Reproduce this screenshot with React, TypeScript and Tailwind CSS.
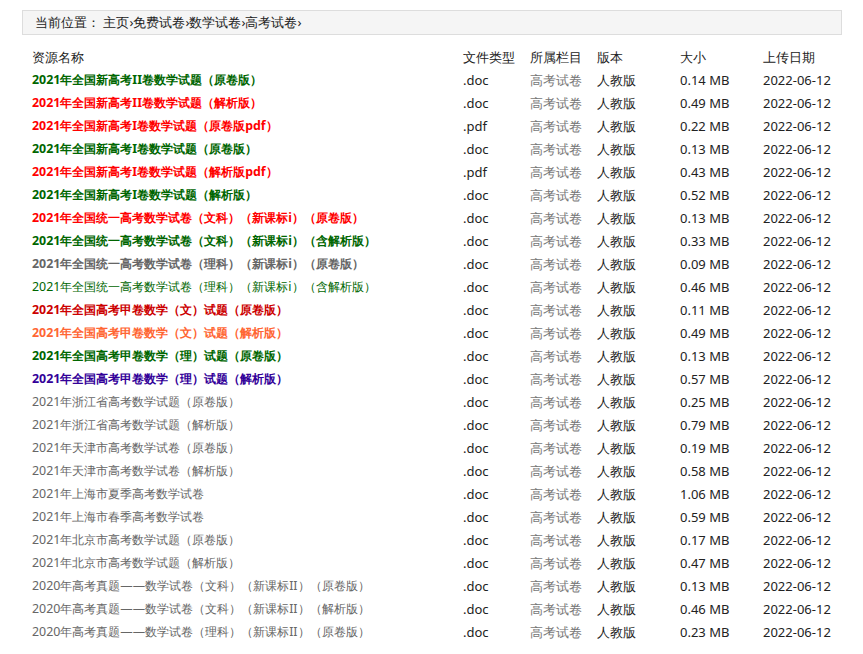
const rows: [string, string, string, string][] = [
  ['2021年全国新高考II卷数学试题（原卷版）', 'text-[#006600] font-bold', '.doc', '0.14 MB'],
  ['2021年全国新高考II卷数学试题（解析版）', 'text-[#ff0000] font-bold', '.doc', '0.49 MB'],
  ['2021年全国新高考I卷数学试题（原卷版pdf）', 'text-[#ff0000] font-bold', '.pdf', '0.22 MB'],
  ['2021年全国新高考I卷数学试题（原卷版）', 'text-[#006600] font-bold', '.doc', '0.13 MB'],
  ['2021年全国新高考I卷数学试题（解析版pdf）', 'text-[#ff0000] font-bold', '.pdf', '0.43 MB'],
  ['2021年全国新高考I卷数学试题（解析版）', 'text-[#006600] font-bold', '.doc', '0.52 MB'],
  ['2021年全国统一高考数学试卷（文科）（新课标i）（原卷版）', 'text-[#ff0000] font-bold', '.doc', '0.13 MB'],
  ['2021年全国统一高考数学试卷（文科）（新课标i）（含解析版）', 'text-[#006600] font-bold', '.doc', '0.33 MB'],
  ['2021年全国统一高考数学试卷（理科）（新课标i）（原卷版）', 'text-[#666666] font-bold', '.doc', '0.09 MB'],
  ['2021年全国统一高考数学试卷（理科）（新课标i）（含解析版）', 'text-[#006600]', '.doc', '0.46 MB'],
  ['2021年全国高考甲卷数学（文）试题（原卷版）', 'text-[#cc0000] font-bold', '.doc', '0.11 MB'],
  ['2021年全国高考甲卷数学（文）试题（解析版）', 'text-[#ff6633] font-bold', '.doc', '0.49 MB'],
  ['2021年全国高考甲卷数学（理）试题（原卷版）', 'text-[#006600] font-bold', '.doc', '0.13 MB'],
  ['2021年全国高考甲卷数学（理）试题（解析版）', 'text-[#330099] font-bold', '.doc', '0.57 MB'],
  ['2021年浙江省高考数学试题（原卷版）', 'text-[#666666]', '.doc', '0.25 MB'],
  ['2021年浙江省高考数学试题（解析版）', 'text-[#666666]', '.doc', '0.79 MB'],
  ['2021年天津市高考数学试卷（原卷版）', 'text-[#666666]', '.doc', '0.19 MB'],
  ['2021年天津市高考数学试卷（解析版）', 'text-[#666666]', '.doc', '0.58 MB'],
  ['2021年上海市夏季高考数学试卷', 'text-[#666666]', '.doc', '1.06 MB'],
  ['2021年上海市春季高考数学试卷', 'text-[#666666]', '.doc', '0.59 MB'],
  ['2021年北京市高考数学试题（原卷版）', 'text-[#666666]', '.doc', '0.17 MB'],
  ['2021年北京市高考数学试题（解析版）', 'text-[#666666]', '.doc', '0.47 MB'],
  ['2020年高考真题——数学试卷（文科）（新课标II）（原卷版）', 'text-[#666666]', '.doc', '0.13 MB'],
  ['2020年高考真题——数学试卷（文科）（新课标II）（解析版）', 'text-[#666666]', '.doc', '0.46 MB'],
  ['2020年高考真题——数学试卷（理科）（新课标II）（原卷版）', 'text-[#666666]', '.doc', '0.23 MB'],
];

const grid = 'grid grid-cols-[431px_67px_67px_83px_83px_1fr] h-[23px] items-center';

export default function App() {
  return (
    <div className="min-h-screen bg-white px-[22px] pt-[10px] text-[13px] text-[#333] [font-family:Tahoma,'DejaVu_Sans','Noto_Sans_CJK_SC',sans-serif]">
      {/* Breadcrumb */}
      <div className="flex h-[25px] w-[820px] items-center border border-[#dddddd] bg-[#f5f5f5] pl-[12px] text-[#222]">
        当前位置：&nbsp;主页›免费试卷›数学试卷›高考试卷›
      </div>

      <div className="mt-[11px] pl-[10px]">
        <div className={`${grid} text-[#222]`}>
          <span>资源名称</span>
          <span>文件类型</span>
          <span>所属栏目</span>
          <span>版本</span>
          <span>大小</span>
          <span>上传日期</span>
        </div>
        {rows.map(([name, cls, type, size]) => (
          <div key={name} className={grid}>
            <span className={`whitespace-nowrap text-[12.4px] ${cls}`}>{name}</span>
            <span className="text-[#222]">{type}</span>
            <span className="text-[#777]">高考试卷</span>
            <span className="text-[#222]">人教版</span>
            <span className="text-[#222]">{size}</span>
            <span className="text-[#222]">2022-06-12</span>
          </div>
        ))}
      </div>
    </div>
  );
}
